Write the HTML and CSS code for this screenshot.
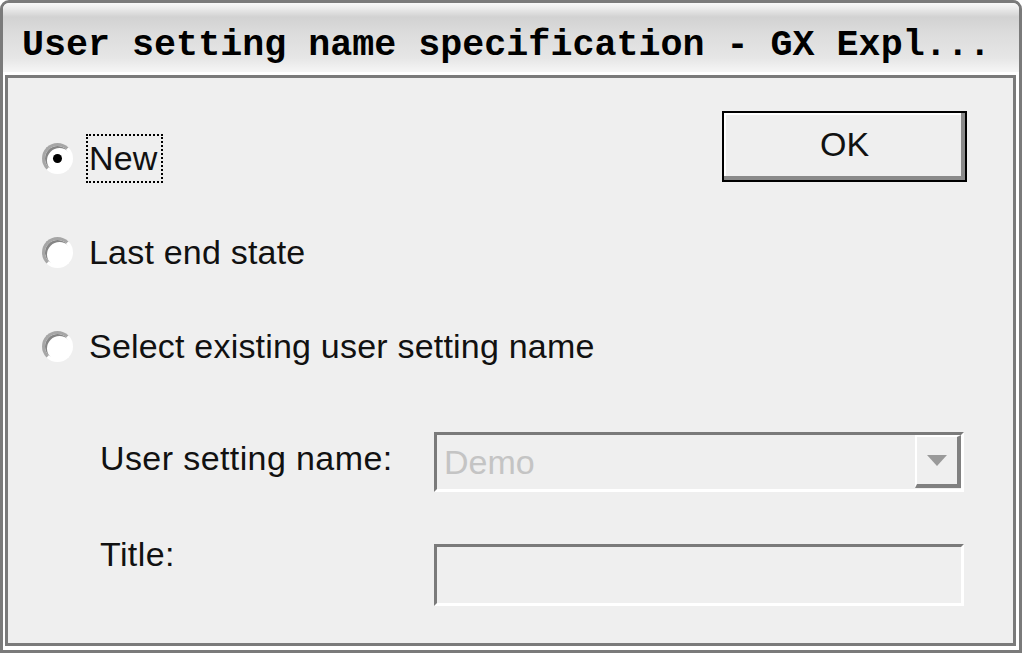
FILE: index.html
```html
<!DOCTYPE html>
<html lang="en">
<head>
<meta charset="utf-8">
<title>User setting name specification</title>
<link rel="stylesheet" href="styles.css">
</head>
<body>
<div class="window">
  <div class="titlebar"><span class="title">User setting name specification - GX Expl...</span></div>
  <div class="frame">
    <div class="client">
      <div class="top">
        <div class="options">
          <div class="option"><span class="radio checked"></span><span class="label focus">New</span></div>
          <div class="option"><span class="radio"></span><span class="label">Last end state</span></div>
          <div class="option"><span class="radio"></span><span class="label">Select existing user setting name</span></div>
        </div>
        <button class="ok" type="button">OK</button>
      </div>
      <div class="form">
        <div class="field-label lbl-name">User setting name:</div>
        <div class="combo">
          <span class="combo-text">Demo</span>
          <span class="drop"><svg width="20" height="11" viewBox="0 0 20 11"><path d="M0 0H20L10 11Z" fill="#9a9a9a"/></svg></span>
        </div>
        <div class="field-label lbl-title">Title:</div>
        <div class="edit"></div>
      </div>
    </div>
  </div>
</div>
</body>
</html>
```

FILE: styles.css
```css
html, body {
  margin: 0;
  padding: 0;
  background: #ffffff;
}
body {
  font-family: "Liberation Sans", Arial, sans-serif;
}
.window {
  box-sizing: border-box;
  width: 1022px;
  height: 653px;
  border: 3px solid #7a7a7a;
  border-radius: 9px 9px 0 0;
  display: flex;
  flex-direction: column;
  background: #ffffff;
  overflow: hidden;
}
.titlebar {
  flex: none;
  height: 69px;
  box-sizing: border-box;
  padding: 21px 0 0 19px;
  background: linear-gradient(to bottom, #f8f8f8 0px, #ececec 5px, #d2d2d2 14px, #dcdcdc 30px, #e6e6e6 55px, #f6f6f6 69px);
}
.title {
  font-family: "Liberation Mono", "DejaVu Sans Mono", monospace;
  font-weight: bold;
  font-size: 36.7px;
  line-height: 42px;
  white-space: nowrap;
  color: #000;
}
.frame {
  flex: 1;
  display: flex;
  padding: 3px 3px 4px 2px;
  background: #ffffff;
}
.client {
  flex: 1;
  border: 3px solid #7a7a7a;
  background: #efefef;
  padding: 33px 46px 0 34px;
}
.top {
  display: flex;
  justify-content: space-between;
  align-items: flex-start;
}
.options {
  display: flex;
  flex-direction: column;
}
.option {
  height: 94px;
  display: flex;
  align-items: center;
  gap: 13px;
}
.radio {
  width: 31px;
  height: 31px;
  box-sizing: border-box;
  border-radius: 50%;
  border: 3px solid;
  border-color: #a6a6a6 #ffffff #ffffff #a6a6a6;
  background: #ffffff;
  box-shadow: inset 2px 2px 0 #858585;
  display: flex;
  align-items: center;
  justify-content: center;
}
.radio.checked::after {
  content: "";
  width: 9px;
  height: 9px;
  border-radius: 50%;
  background: #000;
}
.label {
  font-size: 34px;
  line-height: 45px;
  letter-spacing: 0.2px;
  padding: 0 3px 0 1px;
  border: 2px dotted transparent;
  color: #111;
  white-space: nowrap;
}
.label.focus {
  border-color: #000;
}
.ok {
  width: 245px;
  height: 71px;
  box-sizing: border-box;
  border: 2px solid #000;
  background: #efefef;
  box-shadow: inset -4px -4px 0 #8a8a8a, inset 2px 2px 0 #ffffff;
  font-family: "Liberation Sans", Arial, sans-serif;
  font-size: 34px;
  color: #111;
  padding: 0 0 4px 0;
  margin: 0;
}
.form {
  display: grid;
  grid-template-columns: 334px 530px;
  row-gap: 52px;
  margin: 39px 0 0 58px;
}
.field-label {
  font-size: 34px;
  line-height: 40px;
  letter-spacing: 0.4px;
  align-self: start;
  color: #111;
  white-space: nowrap;
}
.lbl-name {
  margin-top: 6px;
}
.lbl-title {
  margin-top: -10px;
}
.combo {
  height: 60px;
  box-sizing: border-box;
  border: 3px solid;
  border-color: #7a7a7a #ffffff #ffffff #7a7a7a;
  background: #efefef;
  display: flex;
  align-items: center;
  padding-left: 7px;
}
.combo-text {
  flex: 1;
  font-size: 34px;
  color: #c4c4c4;
}
.drop {
  width: 46px;
  align-self: stretch;
  box-sizing: border-box;
  border-style: solid;
  border-width: 2px 4px 4px 2px;
  border-color: #ffffff #808080 #808080 #ffffff;
  display: flex;
  align-items: center;
  justify-content: center;
  margin-bottom: 1px;
}
.edit {
  height: 62px;
  box-sizing: border-box;
  border: 3px solid;
  border-color: #7a7a7a #ffffff #ffffff #7a7a7a;
  background: #efefef;
}
```
